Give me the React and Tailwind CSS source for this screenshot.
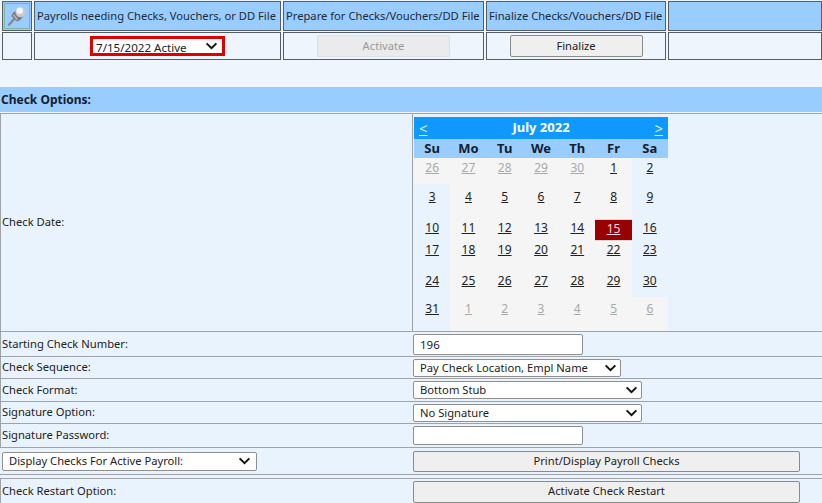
import React from "react";

const font = "font-['Noto_Sans',sans-serif]";

function Chevron({ className }) {
  return (
    <svg viewBox="0 0 14 9" className={"pointer-events-none absolute w-[13px] h-[8px] " + className}>
      <path d="M1.5 1.5 L7 7 L12.5 1.5" fill="none" stroke="#111" strokeWidth="2.2" />
    </svg>
  );
}

function Select({ value, w, h, arrow, wrap = "" }) {
  return (
    <div className={"relative shrink-0 " + w + " " + h + " " + wrap}>
      <select
        defaultValue={value}
        className="appearance-none block w-full h-full bg-white border border-[#8f8f8f] rounded-[2px] pl-[6px] text-[11.2px] text-[#222] outline-none"
      >
        <option>{value}</option>
      </select>
      <Chevron className={arrow + " top-1/2 -translate-y-1/2"} />
    </div>
  );
}

function Btn({ children, w, h, disabled }) {
  return (
    <button
      disabled={disabled}
      className={
        "shrink-0 rounded-[2px] border text-[11.2px] " + w + " " + h + " " +
        (disabled
          ? "bg-[#e9ebed] border-[#dcdfe3] text-[#9a9a9a]"
          : "bg-[#efefef] border-[#8a8a8a] text-[#222]")
      }
    >
      {children}
    </button>
  );
}

function Head({ w, children }) {
  return (
    <div className={"h-[30px] bg-[#99ccff] border border-[#555d66] flex items-center px-[2px] text-[11.2px] text-[#1c2b3a] whitespace-nowrap overflow-hidden " + w}>
      {children}
    </div>
  );
}

function Cell({ w, children }) {
  return (
    <div className={"h-[28px] border border-[#555d66] flex items-center justify-center " + w}>
      {children}
    </div>
  );
}

function Row({ h, label, children }) {
  return (
    <div className={"flex border-t border-[#9fa3a8] " + h}>
      <div className="w-[413px] shrink-0 border-l border-[#9fa3a8] flex items-center pl-[1px] text-[11.2px] text-[#222]">
        {label}
      </div>
      <div className="flex-1 flex items-center">{children}</div>
    </div>
  );
}

const weeks = [
  { cls: "h-[26px] pt-[2px]", days: [[26,1],[27,1],[28,1],[29,1],[30,1],[1],[2]] },
  { cls: "h-[35px] pt-[5px]", days: [[3],[4],[5],[6],[7],[8],[9]] },
  { cls: "h-[22px] pt-[1px]", days: [[10],[11],[12],[13],[14],[15],[16]] },
  { cls: "h-[22px] pt-[1px]", days: [[17],[18],[19],[20],[21],[22],[23]] },
  { cls: "h-[34px] pt-[10px]", days: [[24],[25],[26],[27],[28],[29],[30]] },
  { cls: "h-[34px] pt-[4px]", days: [[31],[1,1],[2,1],[3,1],[4,1],[5,1],[6,1]] },
];

function Calendar() {
  return (
    <div className="w-[254px] ml-[1px] mt-[3px]">
      <div className="h-[22px] bg-[#0f99ff] flex items-center justify-between px-[5px] text-[13px] font-bold text-white">
        <span className="underline font-normal text-[15px] leading-[15px] text-[#dff1ff]">&lt;</span>
        <span>July 2022</span>
        <span className="underline font-normal text-[15px] leading-[15px] text-[#dff1ff]">&gt;</span>
      </div>
      <div className="h-[19px] grid grid-cols-7 bg-[#99ccff] text-[13px] font-bold text-[#14202c]">
        {["Su", "Mo", "Tu", "We", "Th", "Fr", "Sa"].map((d) => (
          <div key={d} className="flex items-center justify-center">{d}</div>
        ))}
      </div>
      {weeks.map((wk, i) => (
        <div key={i} className="grid grid-cols-7">
          {wk.days.map(([n, other], j) => {
            const selected = n === 15 && !other;
            const weekend = (j === 0 || j === 6) && !other;
            return (
              <div
                key={j}
                className={
                  "flex justify-center text-[12px] leading-[16px] underline " + wk.cls + " " +
                  (selected
                    ? "bg-[#990000] text-[#ffd7e8] border-y border-[#d8d8d8]"
                    : other
                    ? "bg-[#f5f5f5] text-[#a9a9a9]"
                    : weekend
                    ? "bg-[#e9f3fd] text-[#222]"
                    : "bg-[#f5f5f5] text-[#222]")
                }
              >
                {n}
              </div>
            );
          })}
        </div>
      ))}
    </div>
  );
}

function Pin() {
  return (
    <svg viewBox="0 0 30 30" className="w-[26px] h-[26px]">
      <path d="M5 26 L12 18" stroke="#8b8b90" strokeWidth="3" strokeLinecap="round" />
      <path d="M8 15 L15 22 L19 20 L24 14 L16 7 L10 11 Z" fill="#77777f" />
      <path d="M11 14 L15 19" stroke="#b5b5bb" strokeWidth="2" strokeLinecap="round" />
      <circle cx="19.5" cy="10" r="6.5" fill="#c9c9cf" />
      <circle cx="18.5" cy="8.5" r="4" fill="#f4f4f6" />
    </svg>
  );
}

export default function App() {
  return (
    <div className={"w-[822px] h-[503px] overflow-hidden bg-[#eef5fd] " + font}>
      <div className="flex gap-[2px] pl-[2px] pt-[1px]">
        <div className="w-[30px] h-[30px] bg-[#99ccff] border border-[#555d66] flex items-center justify-center">
          <div className="w-[26px] h-[26px] border border-[#7fb5a0] flex items-center justify-center"><Pin /></div>
        </div>
        <Head w="w-[247px]">Payrolls needing Checks, Vouchers, or DD File</Head>
        <Head w="w-[201px]">Prepare for Checks/Vouchers/DD File</Head>
        <Head w="w-[180px]">Finalize Checks/Vouchers/DD File</Head>
        <Head w="w-[154px]"></Head>
      </div>
      <div className="flex gap-[2px] pl-[2px] pt-[1px]">
        <Cell w="w-[30px]" />
        <Cell w="w-[247px]">
          <Select value="7/15/2022 Active" w="w-[135px]" h="h-[20px]" arrow="right-[7px]" wrap="[&>select]:border-[3px] [&>select]:border-[#e00000] [&>select]:rounded-none [&>select]:pl-[3px] [&>select]:text-[11.6px]" />
        </Cell>
        <Cell w="w-[201px]"><Btn w="w-[133px]" h="h-[22px]" disabled>Activate</Btn></Cell>
        <Cell w="w-[180px]"><Btn w="w-[133px]" h="h-[22px]">Finalize</Btn></Cell>
        <Cell w="w-[154px]" />
      </div>

      <div className="mt-[27px] h-[25px] bg-[#99ccff] flex items-center pl-[1px] text-[12px] font-bold text-[#14202c]">
        Check Options:
      </div>

      <div className="bg-[#e9f3fd] mt-[1px] h-[390px]">
        <div className="flex h-[218px] border-t border-[#9fa3a8]">
          <div className="w-[413px] shrink-0 border-l border-r border-[#9fa3a8] flex items-center pl-[1px] text-[11.2px] text-[#222]">
            Check Date:
          </div>
          <Calendar />
        </div>

        <Row h="h-[25px]" label="Starting Check Number:">
          <input defaultValue="196" className="w-[170px] h-[21px] bg-white border border-[#8f8f8f] rounded-[2px] pl-[6px] text-[11.5px] text-[#222] outline-none" />
        </Row>
        <Row h="h-[22px]" label="Check Sequence:">
          <Select value="Pay Check Location, Empl Name" w="w-[208px]" h="h-[18px]" arrow="right-[4px]" />
        </Row>
        <Row h="h-[23px]" label="Check Format:">
          <Select value="Bottom Stub" w="w-[229px]" h="h-[18px]" arrow="right-[4px]" />
        </Row>
        <Row h="h-[22px]" label="Signature Option:">
          <Select value="No Signature" w="w-[229px]" h="h-[18px]" arrow="right-[4px]" />
        </Row>
        <Row h="h-[24px]" label="Signature Password:">
          <input className="w-[170px] h-[19px] bg-white border border-[#8f8f8f] rounded-[2px] outline-none" />
        </Row>
        <div className="flex h-[27px] border-t border-[#9fa3a8]">
          <div className="w-[413px] shrink-0 flex items-center pl-[2px]">
            <Select value="Display Checks For Active Payroll:" w="w-[255px]" h="h-[19px]" arrow="right-[6px]" />
          </div>
          <div className="flex-1 flex items-center">
            <Btn w="w-[387px]" h="h-[21px]">Print/Display Payroll Checks</Btn>
          </div>
        </div>
        <div className="h-[4px] border-t border-[#9fa3a8]" />
        <Row h="h-[26px]" label="Check Restart Option:">
          <Btn w="w-[387px]" h="h-[22px]">Activate Check Restart</Btn>
        </Row>
      </div>
    </div>
  );
}
